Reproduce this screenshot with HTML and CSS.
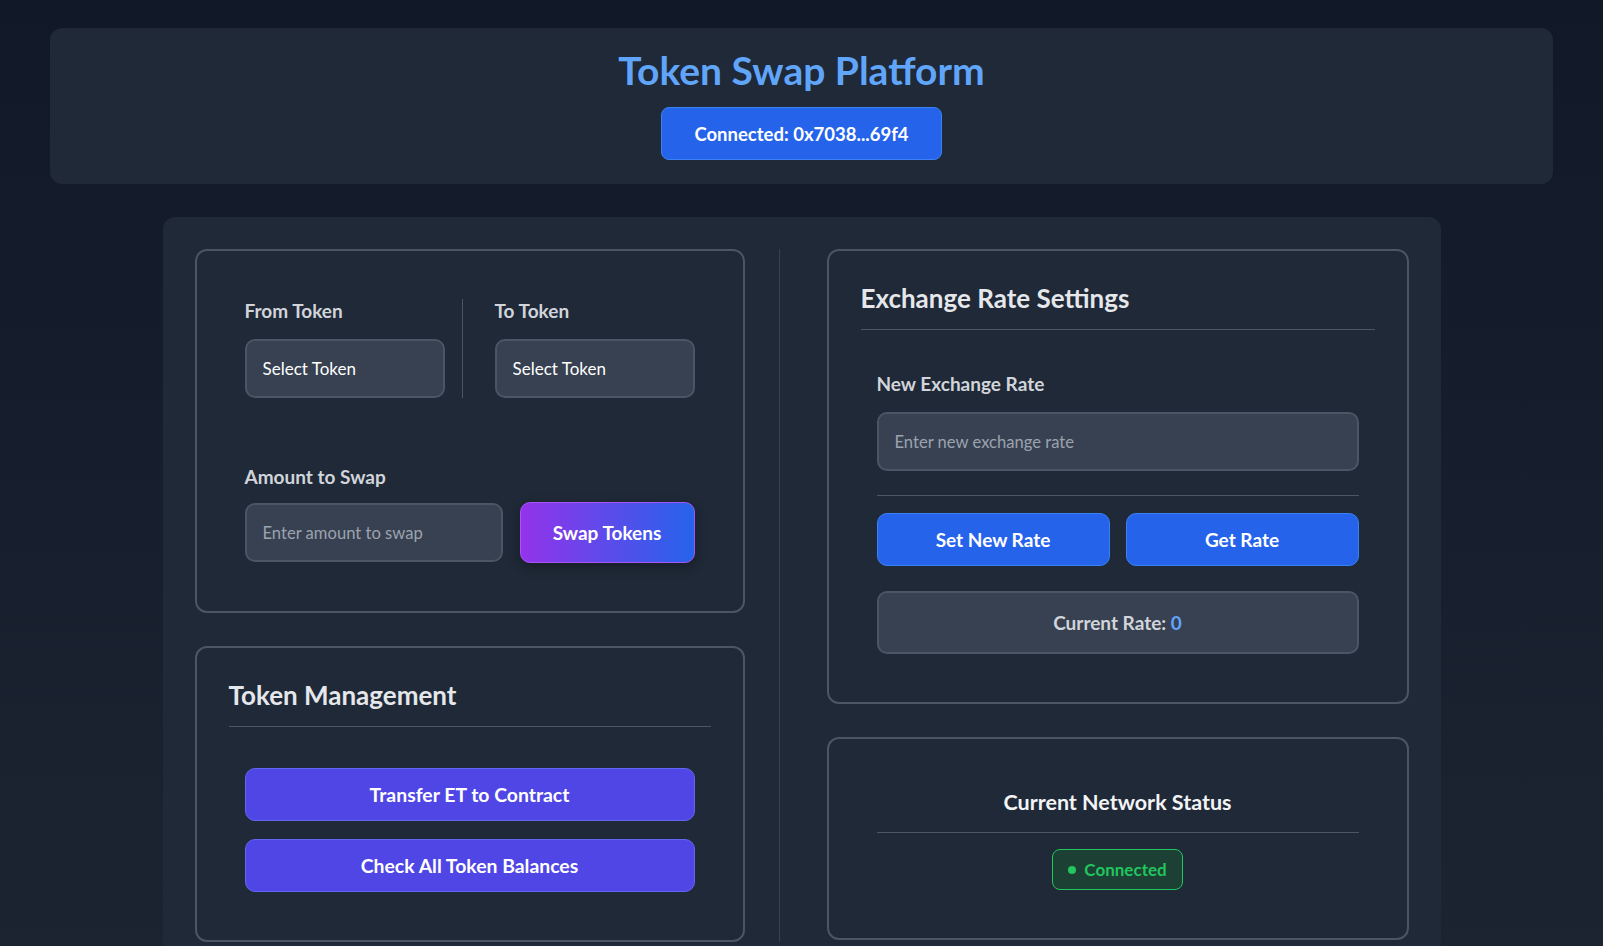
FILE: index.html
```html
<!DOCTYPE html>
<html lang="en">
<head>
<meta charset="utf-8">
<title>Token Swap Platform</title>
<link rel="stylesheet" href="styles.css">
</head>
<body>
<header class="header">
  <h1 class="title">Token Swap Platform</h1>
  <button class="connect-btn">Connected: 0x7038...69f4</button>
</header>

<main class="main">
  <div class="left-col">
    <section class="card">
      <div class="card-inner">
        <div class="pair-row">
          <div class="pair-col">
            <label class="label">From Token</label>
            <select class="select"><option>Select Token</option></select>
          </div>
          <div class="pair-divider"></div>
          <div class="pair-col">
            <label class="label">To Token</label>
            <select class="select"><option>Select Token</option></select>
          </div>
        </div>
        <div class="amount-block">
          <label class="label amount-label">Amount to Swap</label>
          <div class="amount-row">
            <input class="input" type="text" placeholder="Enter amount to swap">
            <button class="swap-btn">Swap Tokens</button>
          </div>
        </div>
      </div>
    </section>

    <section class="card">
      <h2 class="card-title">Token Management</h2>
      <div class="card-inner mgmt">
        <button class="indigo-btn">Transfer ET to Contract</button>
        <button class="indigo-btn">Check All Token Balances</button>
      </div>
    </section>
  </div>

  <div class="right-col">
    <section class="card">
      <h2 class="card-title">Exchange Rate Settings</h2>
      <div class="card-inner rate">
        <label class="label">New Exchange Rate</label>
        <input class="input" type="text" placeholder="Enter new exchange rate">
        <div class="rule"></div>
        <div class="btn-row">
          <button class="blue-btn">Set New Rate</button>
          <button class="blue-btn">Get Rate</button>
        </div>
        <div class="rate-box">Current Rate: <span class="rate-val">0</span></div>
      </div>
    </section>

    <section class="card">
      <div class="card-inner status">
        <h3 class="status-title">Current Network Status</h3>
        <div class="badge"><span class="dot"></span>Connected</div>
      </div>
    </section>
  </div>
</main>
</body>
</html>
```

FILE: styles.css
```css
* { box-sizing: border-box; }

html, body { height: 100%; }

body {
  margin: 0;
  padding: 28px 50px 0;
  min-height: 946px;
  font-family: Lato, "Noto Sans", "Liberation Sans", sans-serif;
  background: linear-gradient(180deg, #111827 0%, #1c2331 100%);
  color: #e5e7eb;
  overflow: hidden;
}

.header {
  background: #1f2937;
  border-radius: 12px;
  padding: 20px 24px 24px;
  display: flex;
  flex-direction: column;
  align-items: center;
}

.title {
  margin: 0;
  font-size: 39px;
  line-height: 44px;
  font-weight: 700;
  color: #60a5fa;
}

.connect-btn {
  margin-top: 15px;
  height: 53px;
  width: 281px;
  background: #2563eb;
  border: 1px solid #3b82f6;
  border-radius: 8px;
  color: #fff;
  font-family: inherit;
  font-size: 18.5px;
  font-weight: 700;
}

.main {
  width: 1278px;
  margin: 33px auto 0;
  background: #1f2937;
  border-radius: 12px;
  padding: 32px 32px 60px;
  display: flex;
  align-items: stretch;
}

.left-col {
  flex: 0 0 550px;
  display: flex;
  flex-direction: column;
  gap: 33px;
}

.right-col {
  flex: 1;
  margin-left: 34px;
  padding-left: 47px;
  border-left: 1px solid #374151;
  display: flex;
  flex-direction: column;
  gap: 33px;
}

.card {
  border: 2px solid #4b5563;
  border-radius: 12px;
  padding: 32px;
  background: #1f2937;
}

.card-inner { padding: 16px; }

.card-title {
  margin: 0;
  font-size: 26px;
  line-height: 30px;
  font-weight: 700;
  color: #e5e7eb;
  padding-bottom: 16px;
  border-bottom: 1px solid #4b5563;
}

.label {
  display: block;
  font-size: 19px;
  line-height: 24px;
  font-weight: 700;
  color: #d1d5db;
  margin-bottom: 16px;
}

.amount-label { margin-bottom: 13px; }

.pair-row {
  display: flex;
  align-items: stretch;
}

.pair-col { width: 200px; }

.pair-divider {
  width: 1px;
  background: #4b5563;
  margin: 0 32px 0 17px;
}

.select, .input {
  display: block;
  width: 100%;
  height: 59px;
  background: #374151;
  border: 2px solid #4b5563;
  border-radius: 10px;
  padding: 0 16px;
  color: #fff;
  font-family: inherit;
  font-size: 17px;
  appearance: none;
  -webkit-appearance: none;
  outline: none;
}

.input { height: 59px; font-size: 16.6px; }

.input::placeholder { color: #9ca3af; }

.amount-block { margin-top: 67px; }

.amount-row {
  display: flex;
  align-items: center;
  gap: 17px;
}

.amount-row .input { flex: 1; }

.swap-btn {
  flex: 0 0 175px;
  height: 61px;
  border: 1px solid #a855f7;
  border-radius: 10px;
  background: linear-gradient(90deg, #9333ea 0%, #2563eb 100%);
  color: #fff;
  font-family: inherit;
  font-size: 19px;
  font-weight: 700;
  box-shadow: 0 4px 12px rgba(0, 0, 0, 0.3);
}

.mgmt {
  margin-top: 25px;
  display: flex;
  flex-direction: column;
  gap: 18px;
}

.indigo-btn {
  height: 53px;
  width: 100%;
  background: #4f46e5;
  border: 1px solid #6366f1;
  border-radius: 10px;
  color: #fff;
  font-family: inherit;
  font-size: 19.4px;
  font-weight: 700;
}

.rate { margin-top: 26px; }

.rule {
  height: 1px;
  background: #4b5563;
  margin: 24px 0 17px;
}

.btn-row {
  display: flex;
  gap: 16px;
}

.blue-btn {
  flex: 1;
  height: 53px;
  background: #2563eb;
  border: 1px solid #3b82f6;
  border-radius: 10px;
  color: #fff;
  font-family: inherit;
  font-size: 19px;
  font-weight: 700;
}

.rate-box {
  margin-top: 25px;
  height: 63px;
  background: #374151;
  border: 2px solid #4b5563;
  border-radius: 10px;
  display: flex;
  align-items: center;
  justify-content: center;
  font-size: 19px;
  font-weight: 700;
  color: #d1d5db;
  white-space: pre;
}

.rate-val { color: #60a5fa; }

.status {
  display: flex;
  flex-direction: column;
  align-items: center;
}

.status-title {
  margin: 0;
  width: 100%;
  text-align: center;
  font-size: 21.5px;
  line-height: 30px;
  font-weight: 700;
  color: #f3f4f6;
  padding-bottom: 15px;
  border-bottom: 1px solid #4b5563;
}

.badge {
  margin-top: 16px;
  height: 41px;
  width: 131px;
  display: flex;
  align-items: center;
  justify-content: center;
  gap: 8px;
  background: #1c4034;
  border: 1px solid #22c55e;
  border-radius: 8px;
  color: #22c55e;
  font-size: 17px;
  font-weight: 700;
}

.dot {
  width: 8px;
  height: 8px;
  border-radius: 50%;
  background: #22c55e;
}
```
